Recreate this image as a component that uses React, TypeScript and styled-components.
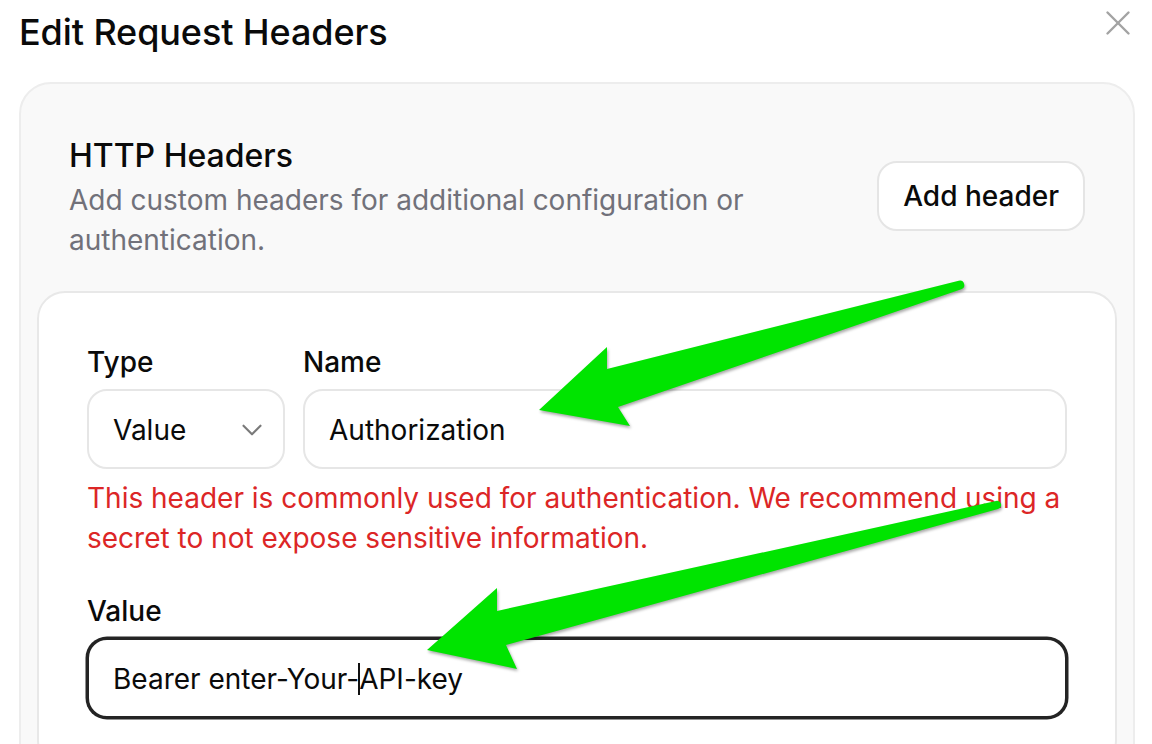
import styled, { createGlobalStyle } from 'styled-components'
import { ChevronDown, X } from 'lucide-react'

const GlobalStyle = createGlobalStyle`
  * { box-sizing: border-box; }
  html, body {
    margin: 0;
    background: #ffffff;
    overflow: hidden;
  }
  body {
    font-family: Inter, "Noto Sans", sans-serif;
    color: #0a0a0a;
    -webkit-font-smoothing: antialiased;
  }
`

const Page = styled.div`
  position: relative;
  width: 1152px;
  height: 744px;
  overflow: hidden;
  padding: 10px 17px 0 19px;
`

const TitleRow = styled.div`
  display: flex;
  justify-content: space-between;
  align-items: flex-start;
`

const Title = styled.h1`
  margin: 0;
  font-size: 36px;
  line-height: 44px;
  font-weight: 500;
  letter-spacing: -0.1px;
`

const CloseButton = styled.button`
  display: flex;
  align-items: center;
  justify-content: center;
  width: 42px;
  height: 42px;
  margin: -8px -4px 0 0;
  padding: 0;
  border: none;
  background: none;
  color: #a3a3a3;
  cursor: pointer;
`

const Panel = styled.section`
  margin-top: 28px;
  background: #f9f9f9;
  border: 2px solid #ededed;
  border-radius: 32px;
  padding: 16px 16px 0;
  height: 800px;
`

const PanelHeader = styled.div`
  display: flex;
  justify-content: space-between;
  align-items: center;
  gap: 32px;
  padding: 32px 32px 31px;
`

const HeaderText = styled.div`
  flex: 1;
`

const PanelTitle = styled.h2`
  margin: 0;
  font-size: 32px;
  line-height: 48px;
  font-weight: 500;
`

const PanelSubtitle = styled.p`
  margin: 0;
  font-size: 28px;
  line-height: 40px;
  color: #71717a;
`

const OutlineButton = styled.button`
  height: 70px;
  padding: 0 24px;
  border: 2px solid #e5e5e5;
  border-radius: 20px;
  background: #ffffff;
  font-family: inherit;
  font-size: 28px;
  font-weight: 500;
  color: #0a0a0a;
  white-space: nowrap;
`

const HeaderCard = styled.div`
  background: #ffffff;
  border: 2px solid #e8e8e8;
  border-radius: 28px;
  padding: 49px 48px 48px;
`

const FieldRow = styled.div`
  display: grid;
  grid-template-columns: 198px 1fr;
  gap: 18px;
`

const Field = styled.div<{ $top?: number }>`
  display: flex;
  flex-direction: column;
  gap: 7px;
  margin-top: ${p => p.$top ?? 0}px;
`

const Label = styled.label`
  font-size: 28px;
  line-height: 40px;
  font-weight: 500;
`

const InputBox = styled.div<{ $focused?: boolean }>`
  display: flex;
  align-items: center;
  justify-content: space-between;
  height: 80px;
  padding: 2px 24px 0;
  border: 2px solid ${p => (p.$focused ? '#242424' : '#e6e6e6')};
  box-shadow: ${p => (p.$focused ? '0 0 0 1.5px #242424' : 'none')};
  border-radius: 20px;
  background: #ffffff;
  font-size: 28px;
  line-height: 40px;
  white-space: nowrap;
`

const SelectChevron = styled(ChevronDown)`
  color: #7a7a7a;
  margin-right: -10px;
`

const Caret = styled.span`
  display: inline-block;
  width: 2px;
  height: 32px;
  margin: 0 -1px;
  background: #111111;
  vertical-align: -6px;
`

const ErrorText = styled.p`
  margin: 9px 0 0;
  font-size: 28px;
  line-height: 40px;
  color: #dc2626;
`

const Annotations = styled.svg`
  position: absolute;
  top: 0;
  left: 0;
  width: 1152px;
  height: 744px;
  pointer-events: none;
  filter: drop-shadow(1px 2px 1.5px rgba(0, 0, 0, 0.35));
`

const arrows = [
  'M958.7,280.7 L607,369 L607,347 L539,410 L630,426 L618,407 L961.3,289.3 A4.5,4.5 0 0 0 958.7,280.7 Z',
  'M996,501 L497,611 L497,588 L427,650 L517,669 L506,645 L998,509 A4,4 0 0 0 996,501 Z',
]

export default function App() {
  return (
    <Page>
      <GlobalStyle />
      <TitleRow>
        <Title>Edit Request Headers</Title>
        <CloseButton aria-label="Close">
          <X size={42} strokeWidth={1.4} />
        </CloseButton>
      </TitleRow>

      <Panel>
        <PanelHeader>
          <HeaderText>
            <PanelTitle>HTTP Headers</PanelTitle>
            <PanelSubtitle>
              Add custom headers for additional configuration or authentication.
            </PanelSubtitle>
          </HeaderText>
          <OutlineButton>Add header</OutlineButton>
        </PanelHeader>

        <HeaderCard>
          <FieldRow>
            <Field>
              <Label>Type</Label>
              <InputBox>
                Value
                <SelectChevron size={34} strokeWidth={1.5} />
              </InputBox>
            </Field>
            <Field>
              <Label>Name</Label>
              <InputBox>Authorization</InputBox>
            </Field>
          </FieldRow>
          <ErrorText>
            This header is commonly used for authentication. We recommend using a secret to not
            expose sensitive information.
          </ErrorText>
          <Field $top={33}>
            <Label>Value</Label>
            <InputBox $focused>
              <span>
                Bearer enter-Your-
                <Caret />
                API-key
              </span>
            </InputBox>
          </Field>
        </HeaderCard>
      </Panel>

      <Annotations viewBox="0 0 1152 744">
        {arrows.map(d => (
          <path key={d} d={d} fill="#00e400" />
        ))}
      </Annotations>
    </Page>
  )
}
